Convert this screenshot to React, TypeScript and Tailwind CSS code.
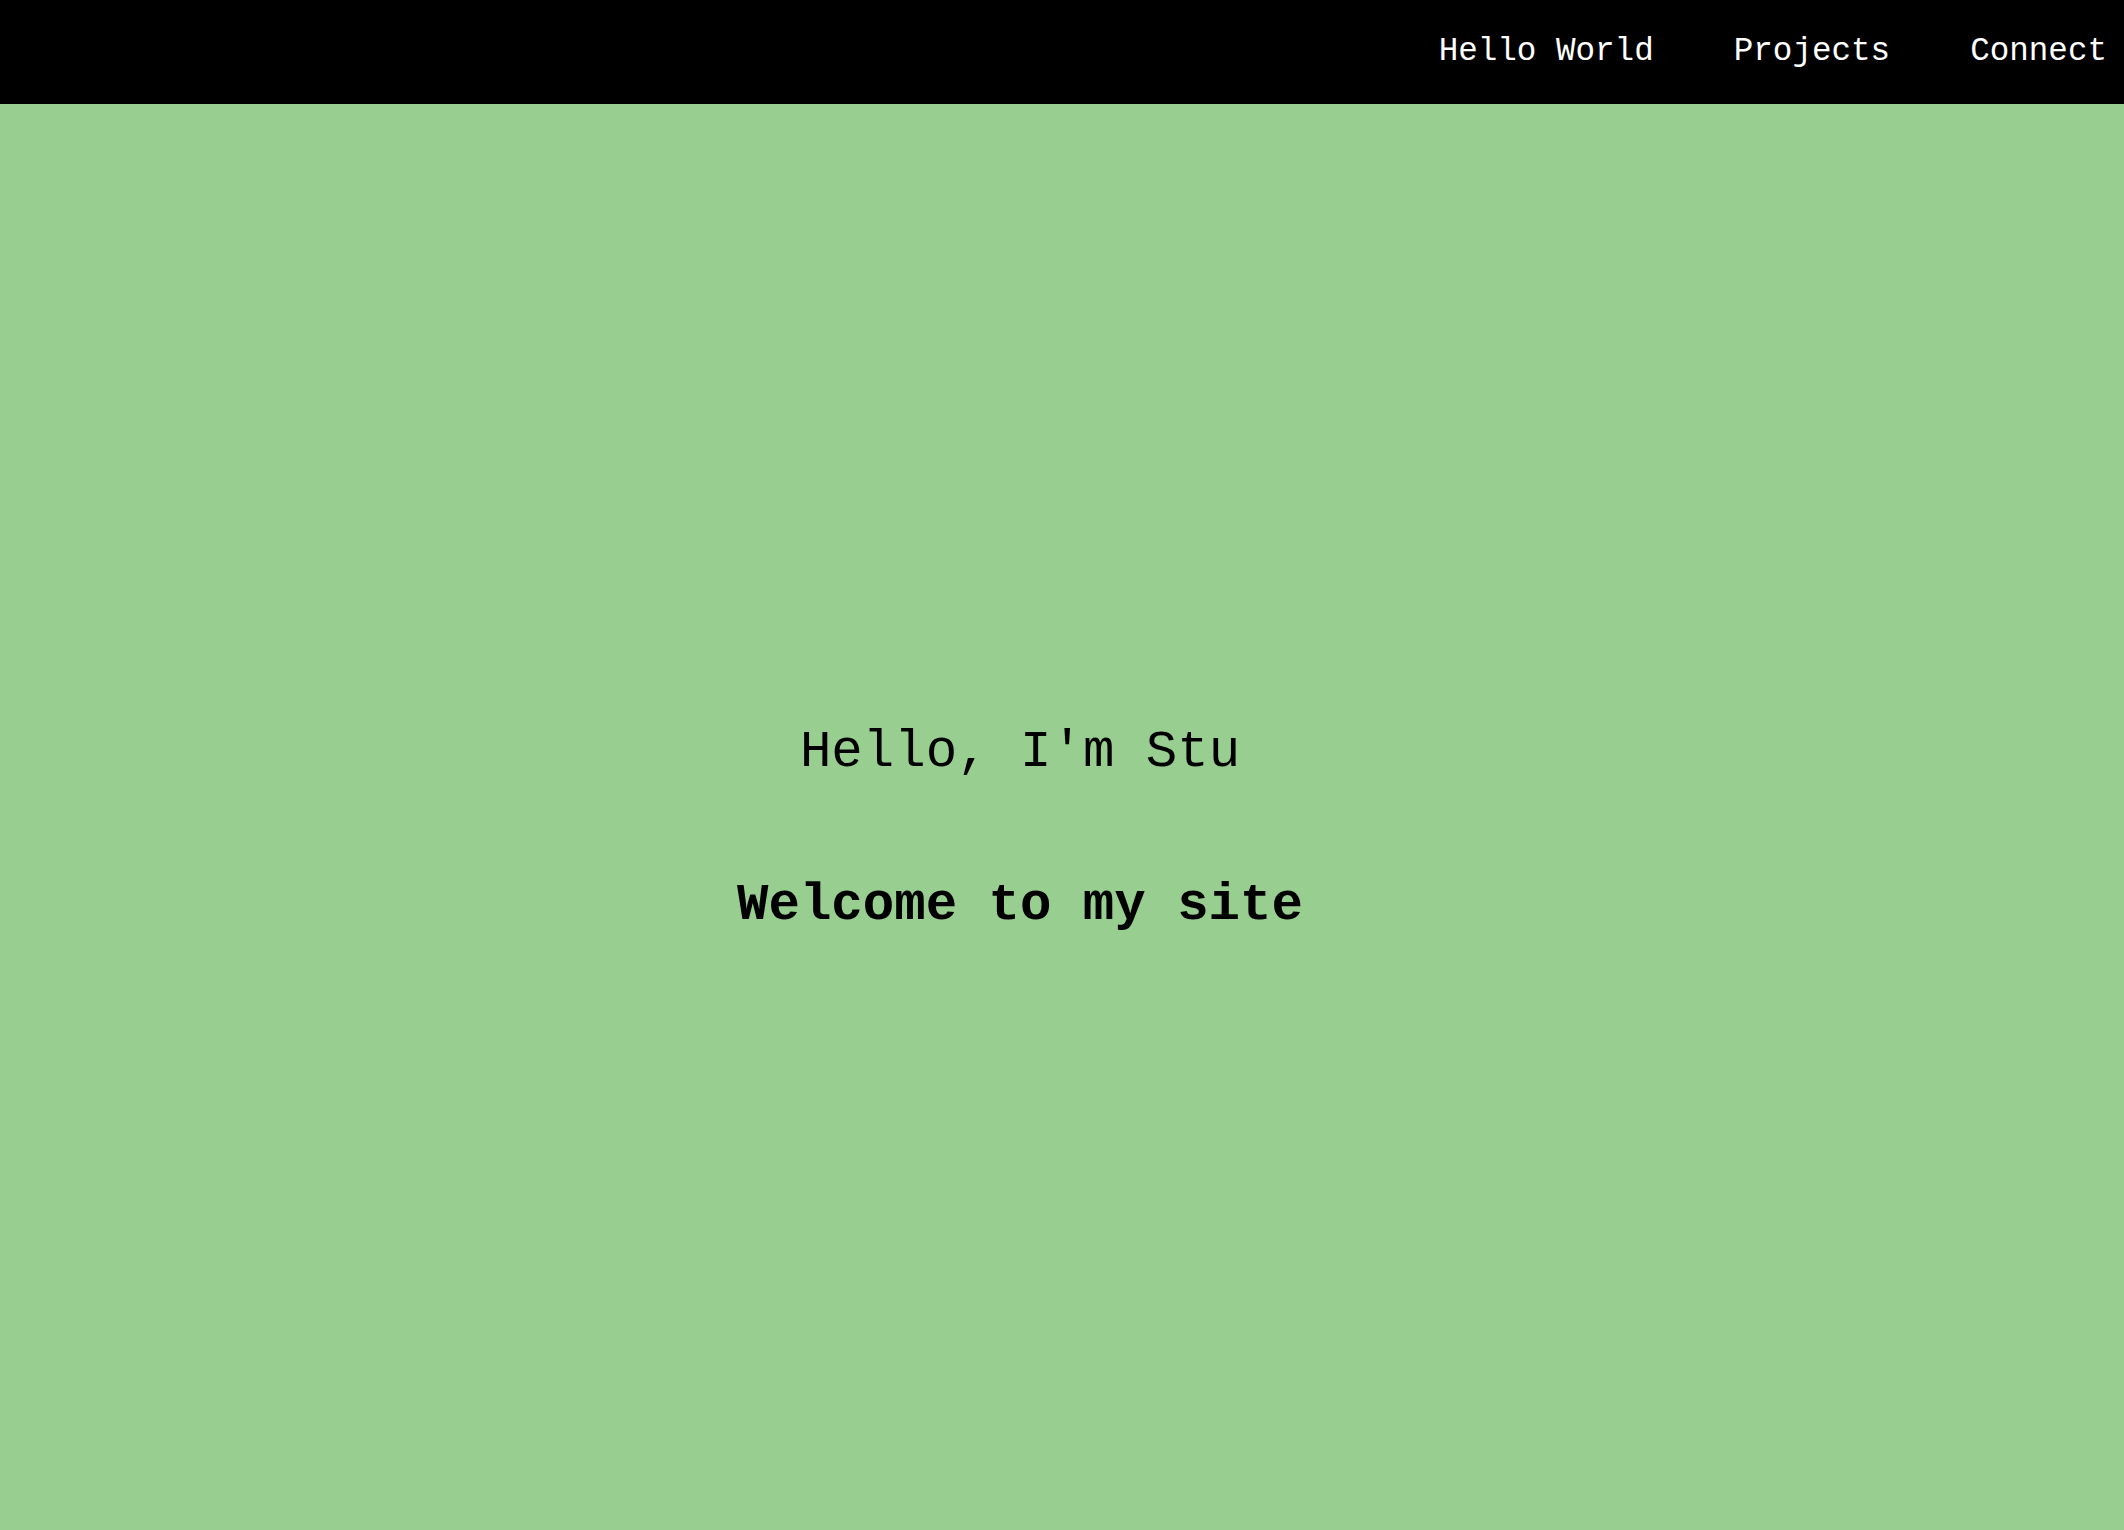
export default function App() {
  return (
    <div className="min-h-screen w-full bg-[#98ce8f] font-['Liberation_Mono',monospace]">
      <header className="flex h-[104px] items-start justify-end gap-[80px] bg-black pr-[17px] pt-[33px] text-white">
        <a className="text-[32.6px] leading-[37px]">Hello World</a>
        <a className="text-[32.6px] leading-[37px]">Projects</a>
        <a className="text-[32.6px] leading-[37px]">Connect</a>
      </header>
      <main className="flex h-[1426px] flex-col items-center pr-[84px] pt-[618px] text-black">
        <h1 className="text-[52.4px] leading-[60px]">Hello, I'm Stu</h1>
        <h2 className="mt-[93px] text-[52.4px] font-bold leading-[60px]">Welcome to my site</h2>
      </main>
    </div>
  );
}
